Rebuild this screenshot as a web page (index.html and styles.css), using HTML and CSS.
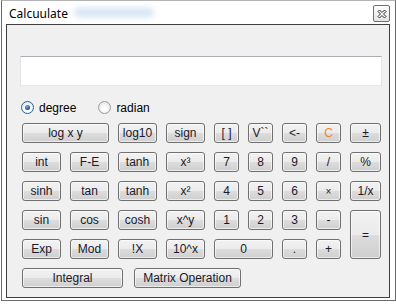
FILE: index.html
```html
<!DOCTYPE html>
<html lang="en">
<head>
  <meta charset="UTF-8" />
  <meta name="viewport" content="width=device-width, initial-scale=1.0"/>
  <title>Calcuulate</title>
  <link rel="stylesheet" href="styles.css">
</head>
<body>
  <div class="window">
    <div class="titlebar">
      <span class="title">Calcuulate</span>
      <span class="glow"></span>
      <button class="close" title="Close">
        <svg width="10" height="10" viewBox="0 0 10 10">
          <path d="M1 2.5 L2.5 1 L5 3.5 L7.5 1 L9 2.5 L6.5 5 L9 7.5 L7.5 9 L5 6.5 L2.5 9 L1 7.5 L3.5 5 Z" fill="#fff" stroke="#2b2b2b" stroke-width="1" stroke-linejoin="round"/>
        </svg>
      </button>
    </div>

    <div class="panel">
      <div class="display"></div>

      <div class="modes">
        <label class="radio"><span class="dot checked"></span>degree</label>
        <label class="radio"><span class="dot"></span>radian</label>
      </div>

      <div class="keys">
        <button class="btn span2">log x y</button>
        <button class="btn">log10</button>
        <button class="btn">sign</button>
        <button class="btn">[ ]</button>
        <button class="btn">V``</button>
        <button class="btn">&lt;-</button>
        <button class="btn orange">C</button>
        <button class="btn">&plusmn;</button>

        <button class="btn">int</button>
        <button class="btn">F-E</button>
        <button class="btn">tanh</button>
        <button class="btn">x&sup3;</button>
        <button class="btn">7</button>
        <button class="btn">8</button>
        <button class="btn">9</button>
        <button class="btn">/</button>
        <button class="btn">%</button>

        <button class="btn">sinh</button>
        <button class="btn">tan</button>
        <button class="btn">tanh</button>
        <button class="btn">x&sup2;</button>
        <button class="btn">4</button>
        <button class="btn">5</button>
        <button class="btn">6</button>
        <button class="btn small">&times;</button>
        <button class="btn">1/x</button>

        <button class="btn">sin</button>
        <button class="btn">cos</button>
        <button class="btn">cosh</button>
        <button class="btn">x^y</button>
        <button class="btn">1</button>
        <button class="btn">2</button>
        <button class="btn">3</button>
        <button class="btn">-</button>
        <button class="btn tall">=</button>

        <button class="btn">Exp</button>
        <button class="btn">Mod</button>
        <button class="btn">!X</button>
        <button class="btn">10^x</button>
        <button class="btn span2">0</button>
        <button class="btn">.</button>
        <button class="btn">+</button>
      </div>

      <div class="extra">
        <button class="btn integral">Integral</button>
        <button class="btn matrix">Matrix Operation</button>
      </div>
    </div>
  </div>
</body>
</html>
```

FILE: styles.css
```css
body {
  margin: 0;
  width: 396px;
  height: 305px;
  background: #fff;
  overflow: hidden;
  font-family: "Liberation Sans", Arial, sans-serif;
}
.window {
  margin-left: 1px;
  width: 393px;
  height: 299px;
  border: 1px solid #6a6a6a;
  border-top-color: #b4b4b4;
  background: #fff;
}
.titlebar {
  height: 23px;
  display: flex;
  align-items: center;
  position: relative;
}
.title {
  margin-left: 7px;
  margin-top: 1px;
  font: 12px "Noto Sans", "Liberation Sans", sans-serif;
  color: #000;
}
.glow {
  position: absolute;
  left: 72px;
  top: 7px;
  width: 80px;
  height: 9px;
  border-radius: 5px;
  background: #c9def0;
  filter: blur(3px);
  opacity: 0.8;
}
.close {
  margin-left: auto;
  margin-right: 5px;
  margin-top: 2px;
  width: 17px;
  height: 17px;
  padding: 0;
  border: 1px solid #6e6e6e;
  border-radius: 2px;
  background: linear-gradient(#fdfdfd, #e4e4e4);
  display: flex;
  align-items: center;
  justify-content: center;
}
.panel {
  margin-left: 4px;
  width: 382px;
  height: 272px;
  border: 1px solid #3f3f3f;
  background: #f0f0f0;
}
.display {
  margin: 31px 0 0 13px;
  width: 360px;
  height: 28px;
  background: #fff;
  border: 1px solid #e2e3ea;
  border-top-color: #abadb3;
  border-bottom-color: #e3e9ef;
}
.modes {
  display: flex;
  align-items: center;
  height: 13px;
  margin: 15px 0 0 14px;
}
.radio {
  display: flex;
  align-items: center;
  gap: 5px;
  margin-right: 22px;
  font: 12px "Liberation Sans", Arial, sans-serif;
  color: #000;
}
.dot {
  width: 11px;
  height: 11px;
  border-radius: 50%;
  border: 1px solid #9a9a9a;
  background: radial-gradient(circle at 50% 60%, #ffffff 20%, #dcdcdc 100%);
  display: flex;
  align-items: center;
  justify-content: center;
}
.dot.checked {
  border-color: #2c628b;
  background: radial-gradient(circle at 50% 60%, #ffffff 25%, #d4dfea 100%);
}
.dot.checked::after {
  content: "";
  width: 5px;
  height: 5px;
  border-radius: 50%;
  background: radial-gradient(circle at 40% 35%, #6fb2e8, #0d3f75 80%);
}
.keys {
  display: grid;
  grid-template-columns: 39px 39px 39px 39px 25px 25px 25px 25px 31px;
  grid-auto-rows: 20px;
  column-gap: 9px;
  row-gap: 9px;
  margin: 9px 0 0 15px;
}
.extra {
  display: flex;
  gap: 11px;
  margin: 9px 0 0 15px;
}
.btn {
  height: 20px;
  padding: 0;
  border: 1px solid #707070;
  border-radius: 3px;
  background: linear-gradient(#f2f2f2 0%, #ebebeb 50%, #dddddd 50%, #cfcfcf 100%);
  box-shadow: inset 0 0 0 1px rgba(255, 255, 255, 0.6);
  font: 12px "Liberation Sans Narrow", "Liberation Sans", Arial, sans-serif;
  color: #1a1a2a;
  white-space: nowrap;
}
.span2 {
  grid-column: span 2;
}
.tall {
  grid-row: span 2;
  height: auto;
}
.orange {
  color: #f08a1c;
}
.small {
  font-size: 10px;
}
.integral {
  width: 101px;
}
.matrix {
  width: 107px;
}
```
